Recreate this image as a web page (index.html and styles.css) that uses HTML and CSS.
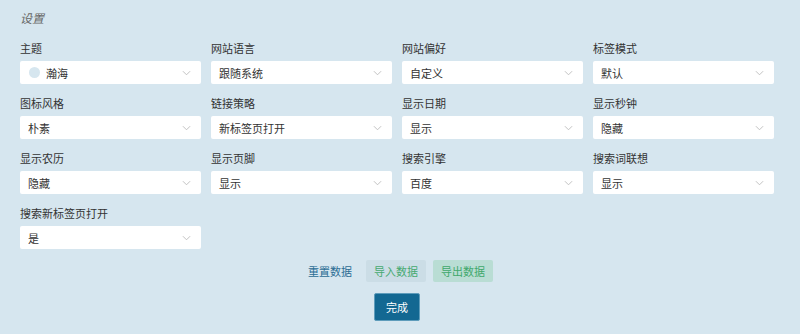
FILE: index.html
```html
<!DOCTYPE html>
<html lang="zh-CN">
<head>
    <meta charset="UTF-8">
    <meta name="viewport" content="width=device-width, initial-scale=1.0">
    <title>设置</title>
    <link rel="stylesheet" href="styles.css">
</head>
<body>
    <div class="panel">
        <h2 class="title">设置</h2>
        <div class="grid">
            <div class="field">
                <label>主题</label>
                <div class="select"><span class="dot"></span><span class="value">瀚海</span><svg class="arrow" viewBox="0 0 10 6"><path d="M1 1l4 4 4-4"/></svg></div>
            </div>
            <div class="field">
                <label>网站语言</label>
                <div class="select"><span class="value">跟随系统</span><svg class="arrow" viewBox="0 0 10 6"><path d="M1 1l4 4 4-4"/></svg></div>
            </div>
            <div class="field">
                <label>网站偏好</label>
                <div class="select"><span class="value">自定义</span><svg class="arrow" viewBox="0 0 10 6"><path d="M1 1l4 4 4-4"/></svg></div>
            </div>
            <div class="field">
                <label>标签模式</label>
                <div class="select"><span class="value">默认</span><svg class="arrow" viewBox="0 0 10 6"><path d="M1 1l4 4 4-4"/></svg></div>
            </div>
            <div class="field">
                <label>图标风格</label>
                <div class="select"><span class="value">朴素</span><svg class="arrow" viewBox="0 0 10 6"><path d="M1 1l4 4 4-4"/></svg></div>
            </div>
            <div class="field">
                <label>链接策略</label>
                <div class="select"><span class="value">新标签页打开</span><svg class="arrow" viewBox="0 0 10 6"><path d="M1 1l4 4 4-4"/></svg></div>
            </div>
            <div class="field">
                <label>显示日期</label>
                <div class="select"><span class="value">显示</span><svg class="arrow" viewBox="0 0 10 6"><path d="M1 1l4 4 4-4"/></svg></div>
            </div>
            <div class="field">
                <label>显示秒钟</label>
                <div class="select"><span class="value">隐藏</span><svg class="arrow" viewBox="0 0 10 6"><path d="M1 1l4 4 4-4"/></svg></div>
            </div>
            <div class="field">
                <label>显示农历</label>
                <div class="select"><span class="value">隐藏</span><svg class="arrow" viewBox="0 0 10 6"><path d="M1 1l4 4 4-4"/></svg></div>
            </div>
            <div class="field">
                <label>显示页脚</label>
                <div class="select"><span class="value">显示</span><svg class="arrow" viewBox="0 0 10 6"><path d="M1 1l4 4 4-4"/></svg></div>
            </div>
            <div class="field">
                <label>搜索引擎</label>
                <div class="select"><span class="value">百度</span><svg class="arrow" viewBox="0 0 10 6"><path d="M1 1l4 4 4-4"/></svg></div>
            </div>
            <div class="field">
                <label>搜索词联想</label>
                <div class="select"><span class="value">显示</span><svg class="arrow" viewBox="0 0 10 6"><path d="M1 1l4 4 4-4"/></svg></div>
            </div>
            <div class="field">
                <label>搜索新标签页打开</label>
                <div class="select"><span class="value">是</span><svg class="arrow" viewBox="0 0 10 6"><path d="M1 1l4 4 4-4"/></svg></div>
            </div>
        </div>
        <div class="actions">
            <button class="btn-reset">重置数据</button>
            <button class="btn-import">导入数据</button>
            <button class="btn-export">导出数据</button>
        </div>
        <div class="done-row">
            <button class="btn-done">完成</button>
        </div>
    </div>
</body>
</html>
```

FILE: styles.css
```css
body {
    margin: 0;
    background: #d6e6ef;
    font-family: "Noto Sans CJK SC", "Liberation Sans", sans-serif;
    color: #333;
}
.panel {
    padding: 10px 26px 0 20px;
}
.title {
    margin: 0;
    font-size: 12px;
    line-height: 16px;
    font-weight: normal;
    font-style: italic;
    color: #666;
}
.grid {
    display: grid;
    grid-template-columns: repeat(4, 1fr);
    column-gap: 10px;
    row-gap: 12px;
    margin-top: 15px;
}
.field label {
    display: block;
    font-size: 11px;
    line-height: 14px;
    margin-bottom: 6px;
    color: #333;
}
.select {
    display: flex;
    align-items: center;
    height: 23px;
    padding: 0 10px 0 8px;
    background: #fff;
    border-radius: 2px;
    font-size: 11px;
    color: #333;
    box-sizing: border-box;
}
.dot {
    width: 11px;
    height: 11px;
    border-radius: 50%;
    background: #d6e6ef;
    margin-right: 6px;
    margin-left: 1px;
}
.value {
    flex: 1;
}
.arrow {
    width: 9px;
    height: 6px;
    fill: none;
    stroke: #bbb;
    stroke-width: 1;
}
.actions {
    display: flex;
    justify-content: center;
    gap: 7px;
    margin-top: 11px;
}
button {
    height: 22px;
    padding: 0 8px;
    border: none;
    border-radius: 2px;
    font-family: inherit;
    font-size: 11px;
    cursor: pointer;
}
.btn-reset {
    background: none;
    color: #2b6d94;
    padding: 0 7px;
}
.btn-import {
    background: #cbdde6;
    color: #46a971;
}
.btn-export {
    background: #b9ddd4;
    color: #3fa86c;
}
.done-row {
    display: flex;
    justify-content: center;
    margin-top: 11px;
}
.btn-done {
    height: 28px;
    padding: 0 11px;
    background: #136892;
    color: #fff;
    border: 1px solid #5e9cbb;
    font-size: 11px;
}
```
